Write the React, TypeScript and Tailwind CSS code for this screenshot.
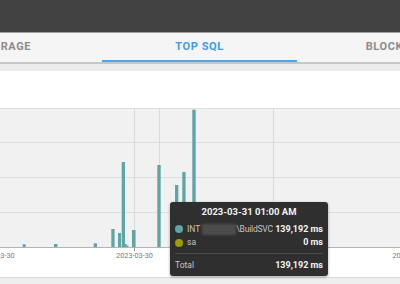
import React from "react";

const bars: [number, number, number][] = [
  [22.7, 3, 173.3],
  [54, 3.4, 173],
  [93.7, 3.3, 172.3],
  [111.3, 3.3, 158],
  [118, 3, 162],
  [121.7, 3.3, 91],
  [125, 1.7, 173],
  [126.7, 1.7, 174.5],
  [132, 3.6, 159],
  [157.3, 3.4, 94],
  [175, 3.3, 114],
  [182.3, 3.3, 101],
  [192.3, 3.4, 38.7],
];

function Tabs() {
  const tabs = ["STORAGE", "TOP SQL", "BLOCKING"];
  return (
    <div className="flex h-[29px] bg-[#f5f5f5] ml-[-93px]">
      {tabs.map((t) => {
        const active = t === "TOP SQL";
        return (
          <div
            key={t}
            className={
              "relative flex w-[195px] shrink-0 items-center justify-center whitespace-nowrap text-[11px] font-bold tracking-[0.6px] " +
              (active ? "text-[#3d9ce9]" : "text-[#8c8c8c]")
            }
          >
            {t}
            {active && <div className="absolute bottom-0 left-0 right-0 h-[2px] bg-[#4aa6ee]" />}
          </div>
        );
      })}
    </div>
  );
}

function Chart() {
  return (
    <svg width="400" height="206" className="block">
      <rect x="0" y="37" width="400" height="139" fill="#f1f1f1" />
      {[37.5, 71.5, 106.5, 141.5].map((y) => (
        <line key={y} x1="0" x2="400" y1={y} y2={y} stroke="#dedede" strokeWidth="1" />
      ))}
      {[134.5, 159.5, 273.5].map((x) => (
        <line key={x} x1={x} x2={x} y1="37" y2="176" stroke="#dadada" strokeWidth="1" />
      ))}
      {bars.map(([x, w, top], i) => (
        <rect key={i} x={x} y={top} width={w} height={176 - top} fill="#5ea6a6" />
      ))}
      <line x1="0" x2="400" y1="176.5" y2="176.5" stroke="#b4b4b4" strokeWidth="1" />
      <line x1="134.5" x2="134.5" y1="176" y2="180" stroke="#999" strokeWidth="1" />
      <text x="-3.8" y="186.5" textAnchor="middle" fontSize="7.3" fill="#7a7a7a" fontFamily="Roboto, sans-serif">
        2023-03-30
      </text>
      <text x="134.5" y="186.5" textAnchor="middle" fontSize="7.3" fill="#7a7a7a" fontFamily="Roboto, sans-serif">
        2023-03-30
      </text>
      <text x="410.8" y="186.5" textAnchor="middle" fontSize="7.3" fill="#7a7a7a" fontFamily="Roboto, sans-serif">
        2023-03-31
      </text>
    </svg>
  );
}

function Tooltip() {
  return (
    <div className="absolute left-[170px] top-[131px] w-[158px] whitespace-nowrap rounded-[3px] bg-[#2f2f2f] px-[5px] pt-[3px] pb-[4px] shadow-[0_1px_3px_rgba(0,0,0,0.35)]">
      <div className="h-[14px] text-center text-[9.5px] font-bold leading-[14px] text-[#f2f2f2]">
        2023-03-31 01:00 AM
      </div>
      <div className="mt-[3px] flex h-[14px] items-center text-[8.5px] leading-[14px]">
        <span className="h-[8px] w-[8px] shrink-0 rounded-full bg-[#5ea6a6]" />
        <span className="ml-[4px] text-[#c4c4c4]">INT</span>
        <span className="ml-[2px] h-[11px] w-[34px] shrink-0 bg-[#4c4c4c] blur-[1px]" />
        <span className="tracking-[-0.2px] text-[#c4c4c4]">\BuildSVC</span>
        <span className="ml-auto text-[9px] font-bold text-[#f5f5f5]">139,192 ms</span>
      </div>
      <div className="flex h-[13px] items-center text-[8.5px] leading-[13px]">
        <span className="h-[8px] w-[8px] shrink-0 rounded-full bg-[#9e9d00]" />
        <span className="ml-[4px] text-[#c4c4c4]">sa</span>
        <span className="ml-auto text-[9px] font-bold text-[#f5f5f5]">0 ms</span>
      </div>
      <div className="mt-[4px] h-px bg-[#4a4a4a]" />
      <div className="mt-[4px] flex h-[14px] items-center text-[8.5px] leading-[14px]">
        <span className="text-[#c8c8c8]">Total</span>
        <span className="ml-auto text-[9px] font-bold text-[#f5f5f5]">139,192 ms</span>
      </div>
    </div>
  );
}

export default function App() {
  return (
    <div className="flex h-[284px] w-[400px] flex-col overflow-hidden bg-white font-['Roboto',sans-serif]">
      <div className="h-[33px] shrink-0 border-b border-[#a0a0a0] bg-[#424242]" />
      <Tabs />
      <div className="h-[2px] shrink-0 bg-[#c6c6c6]" />
      <div className="h-[7px] shrink-0 bg-[#ececec]" />
      <div className="relative h-[206px] shrink-0">
        <Chart />
        <Tooltip />
      </div>
      <div className="flex-1 border-t border-[#d8d8d8] bg-[#eeeeee]" />
    </div>
  );
}
